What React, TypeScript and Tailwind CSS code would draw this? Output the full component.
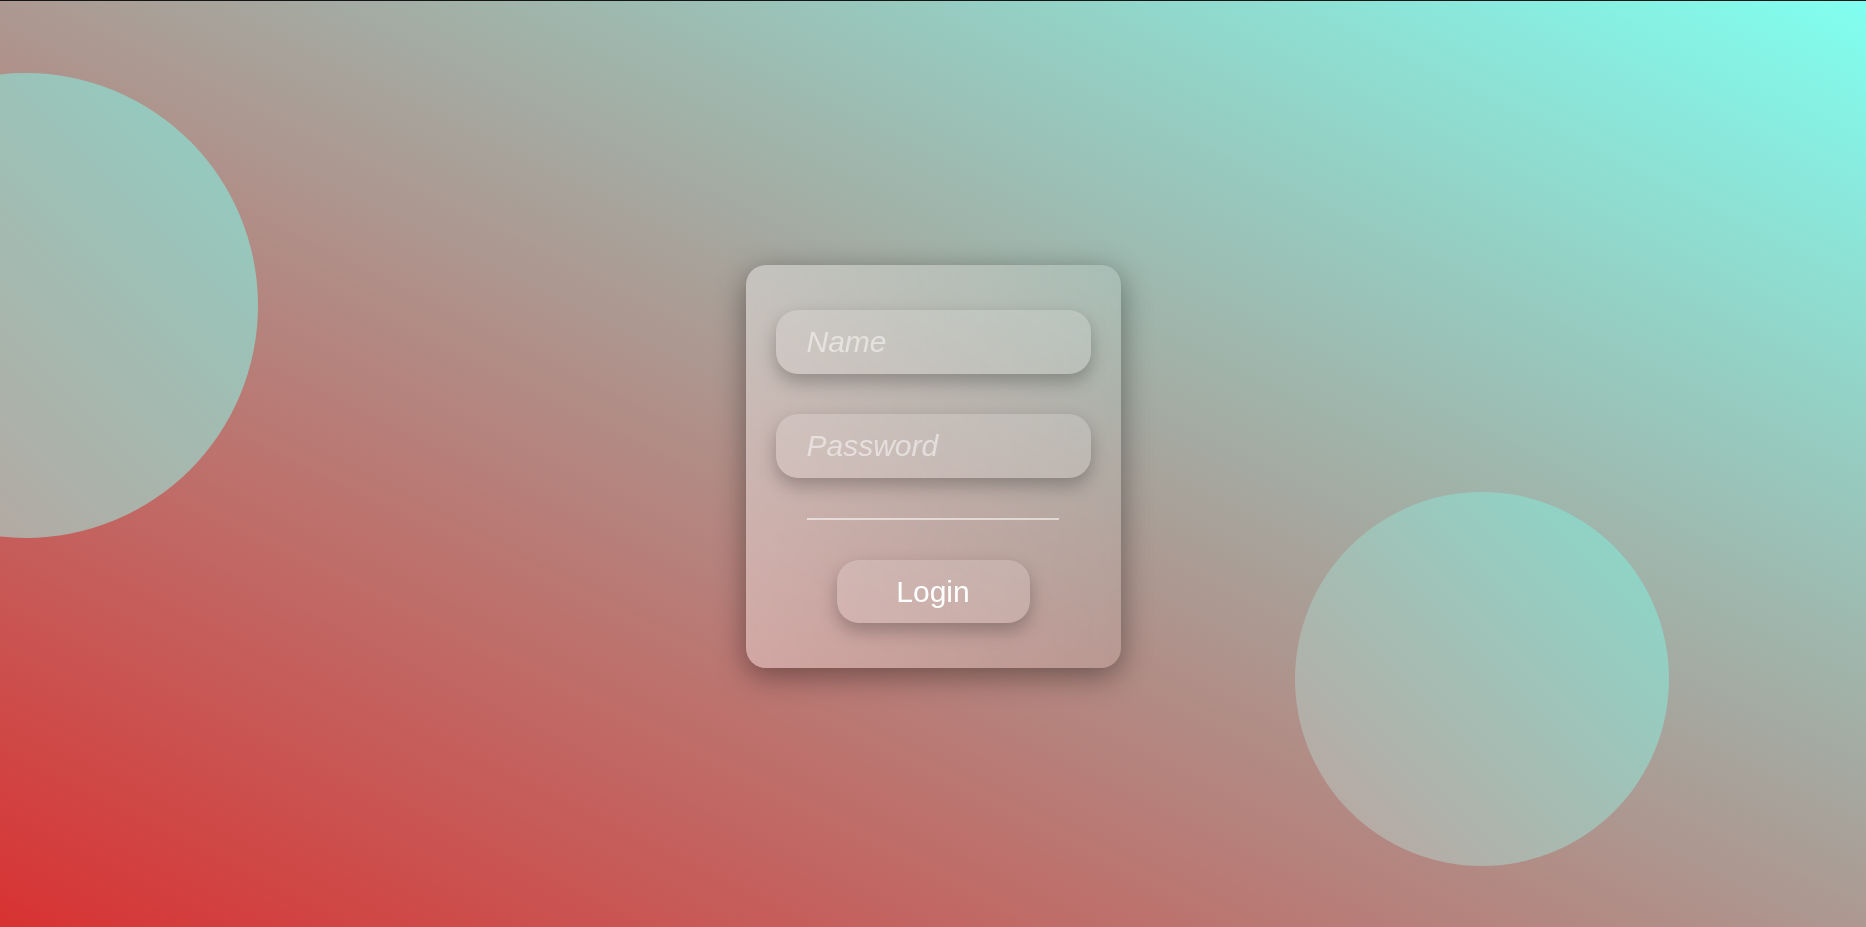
import React from "react";

export default function App() {
  return (
    <div
      className="relative h-[927px] w-full overflow-hidden border-t border-[#151515] bg-[linear-gradient(to_right_top,#d83232,#80fff0)]"
      style={{ fontFamily: '"Liberation Sans", Arial, sans-serif' }}
    >
      <div className="absolute left-[-207px] top-[72px] h-[465px] w-[465px] rounded-full bg-[linear-gradient(to_right_top,#bd9f99,#8fd0c4)]" />
      <div className="absolute left-[1295px] top-[491px] h-[374px] w-[374px] rounded-full bg-[linear-gradient(to_right_top,#bea39e,#87dccd)]" />

      <div className="relative flex h-full w-full items-center justify-center pt-[5px]">
        <div className="flex w-[375px] flex-col items-center rounded-[20px] bg-[linear-gradient(to_right,rgba(255,255,255,0.35),rgba(255,255,255,0.1))] px-[30px] pb-[45px] pt-[45px] shadow-[0_8px_30px_rgba(0,0,0,0.4)] backdrop-blur-md">
          <input
            type="text"
            placeholder="Name"
            className="h-[64px] w-full rounded-[22px] bg-white/15 pl-[31px] text-[30px] italic text-white shadow-[0_8px_18px_rgba(0,0,0,0.25)] outline-none placeholder:text-white/50"
          />
          <input
            type="password"
            placeholder="Password"
            className="mt-[40px] h-[64px] w-full rounded-[22px] bg-white/15 pl-[31px] text-[30px] italic text-white shadow-[0_8px_18px_rgba(0,0,0,0.25)] outline-none placeholder:text-white/50"
          />
          <div className="mt-[40px] h-[2px] w-[252px] bg-white/55" />
          <button className="mt-[40px] h-[63px] w-[193px] rounded-[22px] bg-white/15 text-[30px] text-white shadow-[0_8px_18px_rgba(0,0,0,0.25)]">
            Login
          </button>
        </div>
      </div>
    </div>
  );
}
